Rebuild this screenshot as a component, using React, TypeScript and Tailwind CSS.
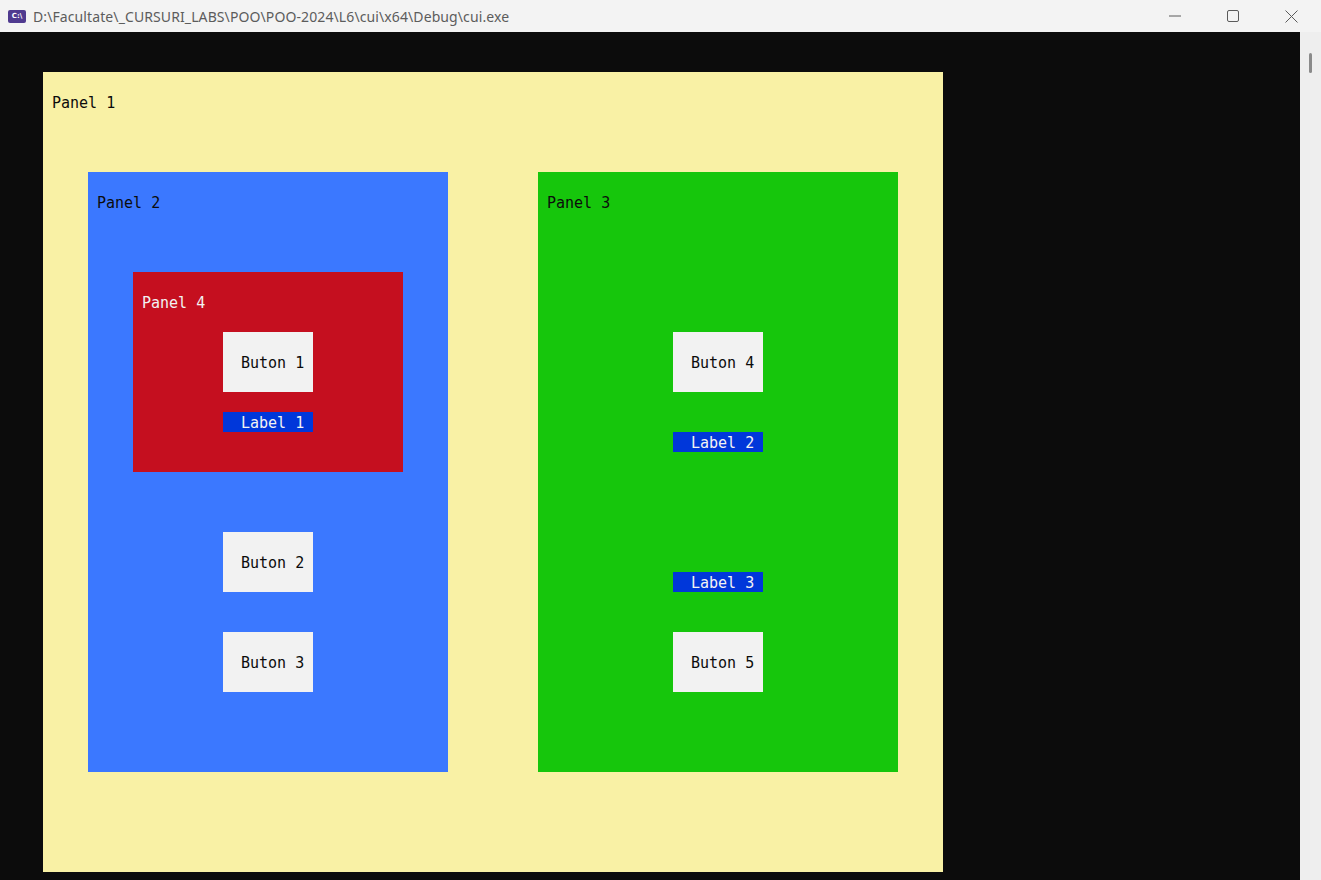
const mono = "font-['DejaVu_Sans_Mono',monospace] text-[15px] leading-[20px]";

function Caption({ text, light }: { text: string; light?: boolean }) {
  return (
    <div className={`${mono} mt-[20px] ml-[9px] h-[20px] pt-[1px] whitespace-pre ${light ? 'text-[#f2f2f2]' : 'text-[#0c0c0c]'}`}>
      {text}
    </div>
  );
}

function Button({ text, className = '' }: { text: string; className?: string }) {
  return (
    <div className={`${mono} w-[90px] h-[60px] bg-[#f2f2f2] text-[#0c0c0c] flex items-center pl-[18px] pt-[2px] whitespace-pre ${className}`}>
      {text}
    </div>
  );
}

function Label({ text, className = '' }: { text: string; className?: string }) {
  return (
    <div className={`${mono} w-[90px] h-[20px] bg-[#0037da] text-[#f2f2f2] pl-[18px] pt-[1px] whitespace-pre ${className}`}>
      {text}
    </div>
  );
}

export default function App() {
  return (
    <div className="w-[1321px] h-[880px] flex flex-col overflow-hidden bg-[#0c0c0c]">
      {/* title bar */}
      <div className="h-[32px] bg-[#f3f3f3] flex items-center shrink-0">
        <div className="ml-[8px] w-[18px] h-[13px] bg-[#4f3a8f] rounded-[2px] flex items-center justify-center">
          <span className="font-['DejaVu_Sans',sans-serif] text-[7px] leading-none font-bold text-white">C:\</span>
        </div>
        <span className="ml-[7px] font-['Noto_Sans',sans-serif] text-[14px] tracking-[0.1px] text-[#5c5c5c] whitespace-pre">
          D:\Facultate\_CURSURI_LABS\POO\POO-2024\L6\cui\x64\Debug\cui.exe
        </span>
        <div className="ml-auto mr-[1px] flex h-full">
          <div className="w-[58px] h-full flex items-center justify-center">
            <svg width="12" height="12" viewBox="0 0 12 12">
              <line x1="0" y1="6" x2="12" y2="6" stroke="#5a5a5a" strokeWidth="1" />
            </svg>
          </div>
          <div className="w-[58px] h-full flex items-center justify-center">
            <svg width="12" height="12" viewBox="0 0 12 12">
              <rect x="0.5" y="0.5" width="11" height="11" rx="1.5" fill="none" stroke="#5a5a5a" strokeWidth="1" />
            </svg>
          </div>
          <div className="w-[58px] h-full flex items-center justify-center">
            <svg width="13" height="13" viewBox="0 0 13 13">
              <path d="M0.5 0.5 L12.5 12.5 M12.5 0.5 L0.5 12.5" stroke="#5a5a5a" strokeWidth="1" />
            </svg>
          </div>
        </div>
      </div>

      <div className="flex flex-1 min-h-0">
        {/* console */}
        <div className="flex-1 bg-[#0c0c0c] pt-[40px] pl-[43px]">
          <div className="w-[900px] h-[800px] bg-[#f9f1a5] flex flex-col">
            <Caption text="Panel 1" />
            <div className="mt-[60px] ml-[45px] flex gap-[90px]">
              {/* Panel 2 */}
              <div className="w-[360px] h-[600px] bg-[#3b78ff] flex flex-col">
                <Caption text="Panel 2" />
                <div className="mt-[60px] ml-[45px] w-[270px] h-[200px] bg-[#c50f1f] flex flex-col">
                  <Caption text="Panel 4" light />
                  <Button text="Buton 1" className="mt-[20px] ml-[90px]" />
                  <Label text="Label 1" className="mt-[20px] ml-[90px]" />
                </div>
                <Button text="Buton 2" className="mt-[60px] ml-[135px]" />
                <Button text="Buton 3" className="mt-[40px] ml-[135px]" />
              </div>
              {/* Panel 3 */}
              <div className="w-[360px] h-[600px] bg-[#16c60c] flex flex-col">
                <Caption text="Panel 3" />
                <Button text="Buton 4" className="mt-[120px] ml-[135px]" />
                <Label text="Label 2" className="mt-[40px] ml-[135px]" />
                <Label text="Label 3" className="mt-[120px] ml-[135px]" />
                <Button text="Buton 5" className="mt-[40px] ml-[135px]" />
              </div>
            </div>
          </div>
        </div>
        {/* scrollbar */}
        <div className="w-[21px] bg-[#eeeeee] pt-[21px] flex justify-center">
          <div className="w-[3px] h-[20px] rounded-full bg-[#8a8a8a]" />
        </div>
      </div>
    </div>
  );
}
